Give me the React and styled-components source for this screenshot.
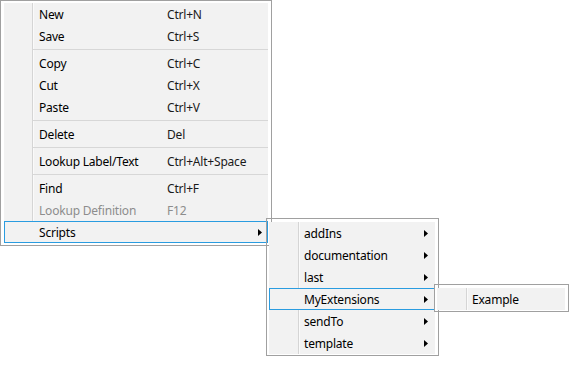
import React from "react";
import styled, { createGlobalStyle, css } from "styled-components";

const GlobalStyle = createGlobalStyle`
  html, body { margin: 0; padding: 0; background: #ffffff; }
  body {
    font-family: "Noto Sans", "Open Sans", "Liberation Sans", sans-serif;
    font-size: 12px;
    letter-spacing: -0.2px;
    color: #000;
  }
`;

const Page = styled.div`
  width: 584px;
  height: 367px;
  position: relative;
  overflow: hidden;
`;

const Menu = styled.div`
  box-sizing: border-box;
  width: ${(p) => p.$width}px;
  background-color: #f2f2f2;
  border: 1px solid #a0a0a0;
  padding: ${(p) => (p.$sub ? "3px 3px 1px 2px" : "2px 3px 2px 3px")};
  display: flex;
  flex-direction: column;
  background-image: linear-gradient(
    to right,
    transparent ${(p) => p.$gutter}px,
    #d5d5d5 ${(p) => p.$gutter}px,
    #d5d5d5 ${(p) => p.$gutter + 1}px,
    #fafafa ${(p) => p.$gutter + 1}px,
    #fafafa ${(p) => p.$gutter + 2}px,
    transparent ${(p) => p.$gutter + 2}px
  );
  background-origin: content-box;
  background-clip: content-box;
  background-repeat: no-repeat;
  ${(p) =>
    p.$sub &&
    css`
      position: absolute;
      top: ${p.$top}px;
      left: ${p.$left}px;
      z-index: 2;
    `}
`;

const Item = styled.div`
  position: relative;
  box-sizing: border-box;
  height: 22px;
  display: flex;
  align-items: center;
  padding: 2px 0 0 34px;
  border: 1px solid transparent;
  white-space: nowrap;
  color: ${(p) => (p.$disabled ? "#8d8d8d" : "#000")};
  ${(p) =>
    p.$active &&
    css`
      border-color: #2a9ce0;
      background: #f2f2f2;
    `}
`;

const Label = styled.span`
  display: block;
  width: ${(p) => p.$width || 128}px;
  line-height: 18px;
`;

const Shortcut = styled.span`
  display: block;
  line-height: 18px;
  color: ${(p) => (p.$disabled ? "#8d8d8d" : "#1a1a1a")};
`;

const ArrowBox = styled.span`
  margin-left: auto;
  margin-right: ${(p) => p.$mr}px;
  margin-top: -2px;
  display: flex;
  align-items: center;
`;

const Separator = styled.div`
  height: 5px;
  display: flex;
  align-items: center;
  padding-left: 29px;
  &::before {
    content: "";
    flex: 1;
    height: 1px;
    background: #d7d7d7;
  }
`;

const Arrow = ({ mr = 6 }) => (
  <ArrowBox $mr={mr}>
    <svg width="4" height="7" viewBox="0 0 4 7">
      <polygon points="0,0 4,3.5 0,7" fill="#000" />
    </svg>
  </ArrowBox>
);

const mainItems = [
  { label: "New", sc: "Ctrl+N" },
  { label: "Save", sc: "Ctrl+S" },
  { sep: true },
  { label: "Copy", sc: "Ctrl+C" },
  { label: "Cut", sc: "Ctrl+X" },
  { label: "Paste", sc: "Ctrl+V" },
  { sep: true },
  { label: "Delete", sc: "Del" },
  { sep: true },
  { label: "Lookup Label/Text", sc: "Ctrl+Alt+Space" },
  { sep: true },
  { label: "Find", sc: "Ctrl+F" },
  { label: "Lookup Definition", sc: "F12", disabled: true },
];

const scriptItems = ["addIns", "documentation", "last", "MyExtensions", "sendTo", "template"];

export default function App() {
  return (
    <Page>
      <GlobalStyle />
      <Menu $width={272} $gutter={28}>
        {mainItems.map((it, i) =>
          it.sep ? (
            <Separator key={i} />
          ) : (
            <Item key={i} $disabled={it.disabled}>
              <Label>{it.label}</Label>
              <Shortcut $disabled={it.disabled}>{it.sc}</Shortcut>
            </Item>
          )
        )}
        <Item $active>
          <Label>Scripts</Label>
          <Arrow mr={5} />
          <Menu $sub $width={173} $gutter={29} $top={-4} $left={261}>
            {scriptItems.map((name) => (
              <Item key={name} $active={name === "MyExtensions"}>
                <Label>{name}</Label>
                <Arrow mr={6} />
                {name === "MyExtensions" && (
                  <Menu $sub $width={135} $gutter={29} $top={-5} $left={164}>
                    <Item>
                      <Label $width={80}>Example</Label>
                    </Item>
                  </Menu>
                )}
              </Item>
            ))}
          </Menu>
        </Item>
      </Menu>
    </Page>
  );
}
